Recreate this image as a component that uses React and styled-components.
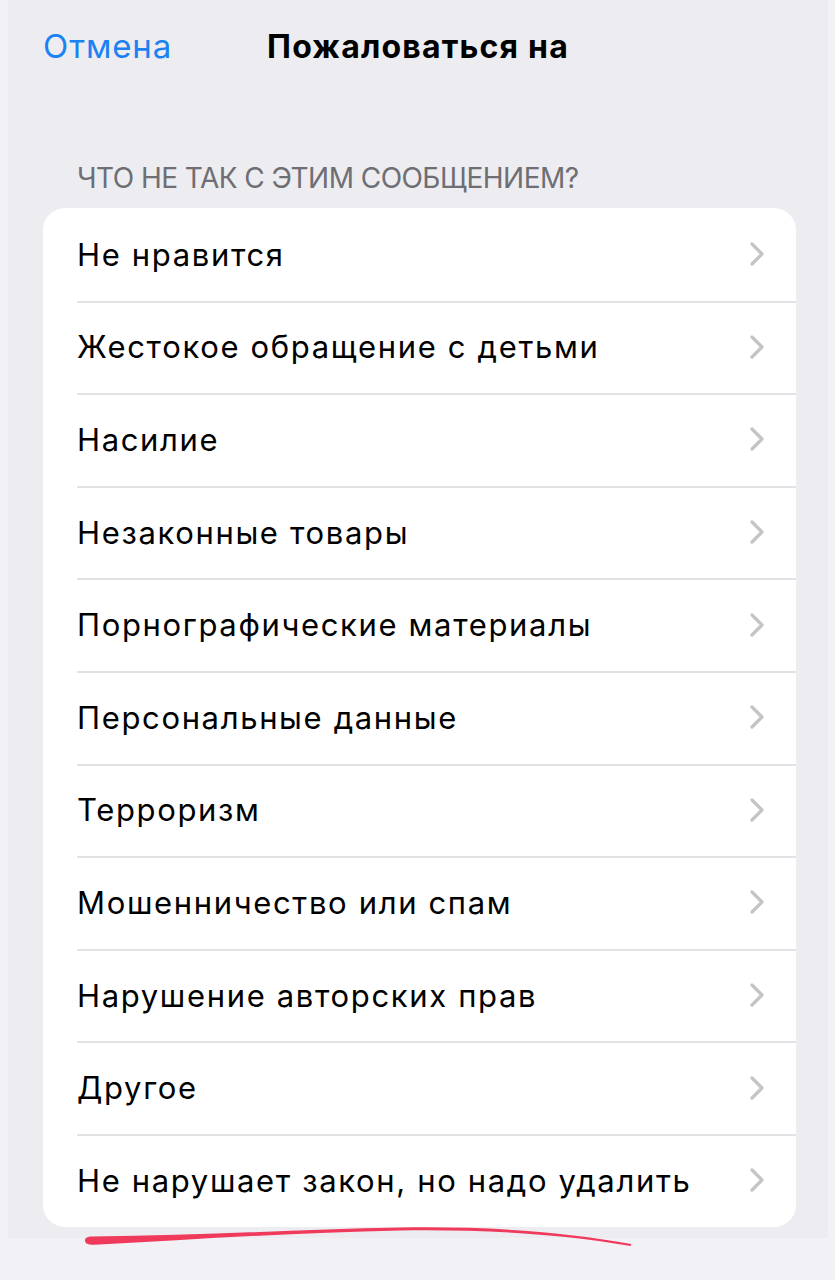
import React from 'react';
import styled, { createGlobalStyle } from 'styled-components';

const GlobalStyle = createGlobalStyle`
  html, body {
    margin: 0;
    padding: 0;
    background: #f2f2f6;
  }
  body {
    font-family: Inter, "Noto Sans", "Liberation Sans", sans-serif;
    -webkit-font-smoothing: antialiased;
  }
`;

const reasons = [
  'Не нравится',
  'Жестокое обращение с детьми',
  'Насилие',
  'Незаконные товары',
  'Порнографические материалы',
  'Персональные данные',
  'Терроризм',
  'Мошенничество или спам',
  'Нарушение авторских прав',
  'Другое',
  'Не нарушает закон, но надо удалить',
];

export default function App() {
  return (
    <Page>
      <GlobalStyle />
      <Sheet>
        <NavBar>
          <CancelButton>Отмена</CancelButton>
          <Title>Пожаловаться на</Title>
          <span />
        </NavBar>
        <SectionLabel>Что не так с этим сообщением?</SectionLabel>
        <List>
          {reasons.map((r, i) => (
            <Row key={r} first={i === 0}>
              <RowText>{r}</RowText>
              <Chevron />
            </Row>
          ))}
        </List>
      </Sheet>
      {/* hand-drawn marker stroke under the list, thick at the start and tapering off */}
      <Scribble viewBox="0 0 835 40" width="835" height="40">
        <path
          d="M85 16.5
             C 85 13.5, 88 12.3, 93 12.4
             C 200 11.5, 300 5.5, 400 3.6
             C 480 2.2, 560 7, 631 20
             C 632 21.3, 630.5 22.4, 629 21.8
             C 560 9.5, 480 5.2, 400 6.4
             C 300 8.3, 200 15, 95 20.8
             C 89 21.2, 85 19.8, 85 16.5 Z"
          fill="#f03a5c"
        />
      </Scribble>
    </Page>
  );
}

const Chevron = () => (
  <ChevronSvg viewBox="0 0 16 26" width="16" height="26">
    <path d="M3 3 L13 13 L3 23" fill="none" stroke="#c4c4c8" strokeWidth="3.2" strokeLinecap="round" strokeLinejoin="round" />
  </ChevronSvg>
);

const Page = styled.div`
  position: relative;
  width: 835px;
  min-height: 1280px;
`;

const Sheet = styled.div`
  margin: 0 7px 0 8px;
  background: #ececf1;
  padding-bottom: 11px;
`;

const NavBar = styled.div`
  display: grid;
  grid-template-columns: 1fr auto 1fr;
  align-items: center;
  height: 92px;
  padding: 0 35px;
`;

const CancelButton = styled.span`
  color: #1b82f2;
  font-size: 33px;
  letter-spacing: 0.9px;
`;

const Title = styled.span`
  color: #000;
  font-size: 32px;
  font-weight: 700;
  letter-spacing: 1.2px;
`;

const SectionLabel = styled.div`
  margin: 71px 0 15px 69px;
  font-size: 28px;
  line-height: 30px;
  letter-spacing: -0.55px;
  text-transform: uppercase;
  color: #6e6e73;
`;

const List = styled.div`
  margin: 0 32px 0 35px;
  background: #fff;
  border-radius: 22px;
  overflow: hidden;
`;

const Row = styled.div`
  position: relative;
  display: flex;
  align-items: center;
  justify-content: space-between;
  height: 92.6px;
  padding: 0 31px 0 34px;

  &::before {
    content: '';
    display: ${(p) => (p.first ? 'none' : 'block')};
    position: absolute;
    top: 0;
    left: 34px;
    right: 0;
    height: 2px;
    background: #e2e2e5;
  }
`;

const RowText = styled.span`
  font-size: 31px;
  color: #000;
  letter-spacing: 1.65px;
`;

const ChevronSvg = styled.svg`
  flex-shrink: 0;
`;

const Scribble = styled.svg`
  position: absolute;
  left: 0;
  top: 1224px;
`;
